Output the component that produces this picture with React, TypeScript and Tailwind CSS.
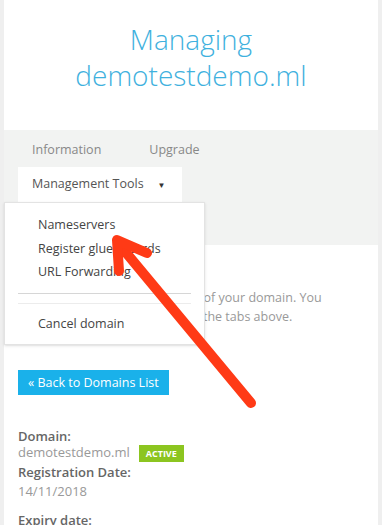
import React from 'react';

const tabs = ['Information', 'Upgrade'];

const menuItems = ['Nameservers', 'Register glue records', 'URL Forwarding'];

const App: React.FC = () => {
  return (
    <div className="min-h-[525px] bg-[#efefef] px-[4px] font-['Open_Sans',sans-serif] overflow-hidden">
      <div className="relative bg-white min-h-[525px]">
        {/* Header */}
        <div className="h-[130px] pt-[21px] text-center text-[28px] leading-[36px] font-light text-[#3fb1de]">
          <div>Managing</div>
          <div>demotestdemo.ml</div>
        </div>

        {/* Tabs */}
        <div className="h-[115px] bg-[#f2f3f2] pt-[9px]">
          <div className="flex pl-[28px] gap-[48px] text-[12.5px] leading-[22px] text-[#888]">
            {tabs.map((t) => (
              <span key={t}>{t}</span>
            ))}
          </div>
          <div className="mt-[6px] ml-[14px] w-[164px] h-[35px] bg-white flex items-center pl-[14px] text-[12.5px] text-[#555]">
            Management Tools
            <span className="ml-[14px] text-[8px] text-[#333]">▼</span>
          </div>
        </div>

        {/* Body */}
        <div className="px-[14px] pt-[43px]">
          <p className="text-[12.5px] leading-[19px] text-[#999] whitespace-nowrap">
            Here you can review the details of your domain. You
            <br />
            can manage it using options on the tabs above.
          </p>
          <button className="mt-[44px] h-[25px] px-[10px] bg-[#1ab1ea] text-white text-[12.5px] leading-[25px]">
            « Back to Domains List
          </button>
          <div className="mt-[33px] text-[13px] text-[#666]">
            <div className="font-semibold leading-[16px]">Domain:</div>
            <div className="flex items-center gap-[9px] h-[18px]">
              <span className="text-[#999]">demotestdemo.ml</span>
              <span className="bg-[#8cc520] text-white text-[9px] font-bold px-[7px] h-[17px] leading-[17px]">
                ACTIVE
              </span>
            </div>
            <div className="font-semibold leading-[20px]">Registration Date:</div>
            <div className="text-[#999] leading-[18px]">14/11/2018</div>
            <div className="font-semibold leading-[20px] mt-[10px]">Expiry date:</div>
          </div>
        </div>

        {/* Dropdown menu */}
        <div className="absolute left-0 top-[202px] w-[201px] h-[143px] bg-white border border-[#e3e3e3] shadow-sm pt-[10px]">
          {menuItems.map((m) => (
            <div key={m} className="pl-[33px] text-[12.5px] leading-[23.5px] text-[#444]">
              {m}
            </div>
          ))}
          <div className="mx-[13px] mt-[9px] border-t border-[#d6d6d6]" />
          <div className="mx-[13px] mt-[9px] border-t border-[#ececec]" />
          <div className="pl-[33px] mt-[8px] text-[12.5px] leading-[23px] text-[#444]">Cancel domain</div>
        </div>

        {/* Annotation arrow */}
        <svg className="absolute left-0 top-0 pointer-events-none" width="382" height="525">
          <g stroke="#ff3a16" strokeWidth="10" strokeLinecap="round" strokeLinejoin="round" fill="none">
            <line x1="247" y1="403" x2="114" y2="243" />
            <polyline points="143,253 113,240 115,271" />
          </g>
        </svg>
      </div>
    </div>
  );
};

export default App;
